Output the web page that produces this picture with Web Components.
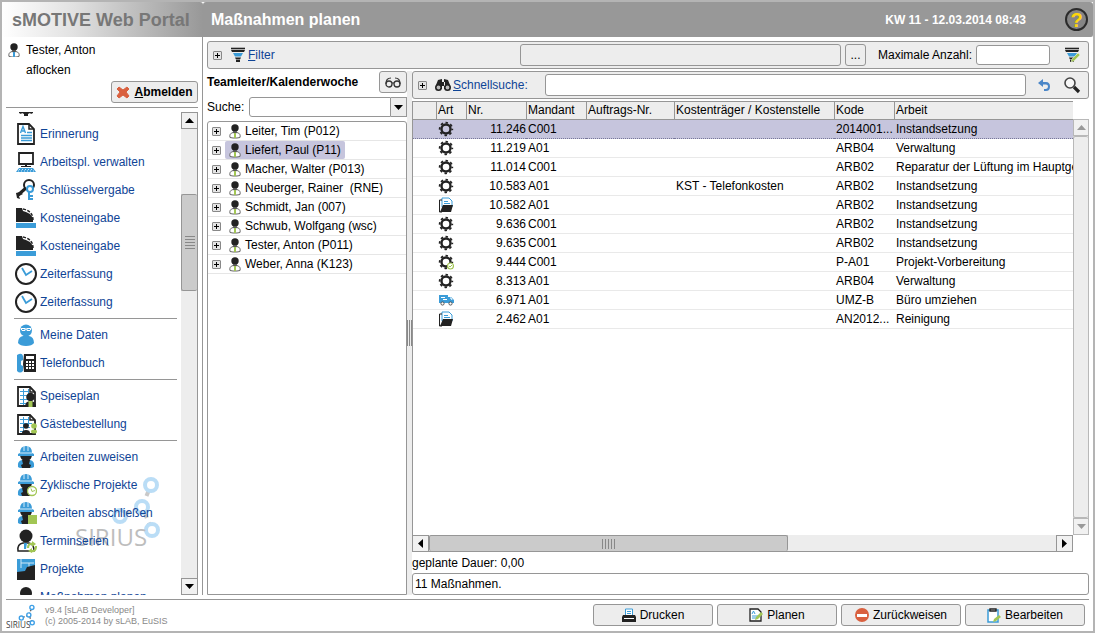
<!DOCTYPE html>
<html lang="de">
<head>
<meta charset="utf-8">
<title>sMOTIVE Web Portal</title>
<style>
  body { margin: 0; font: 12px/16px "Liberation Sans", Arial, sans-serif; color: #000;
    --line: #969696; --panel: #ededed; --link: #0f4496; --select: #c6c5dd; --blue: #3b9cd8; }
</style>
</head>
<body>
<portal-app></portal-app>
<script>
const BASE = `*{box-sizing:border-box} button,input{font:inherit;color:inherit;margin:0;padding:0}
  button{cursor:pointer} a{color:var(--link);text-decoration:none} ul{list-style:none;margin:0;padding:0}
  input{background:#fff;border:1px solid var(--line);border-radius:3px;min-width:0;padding:0 3px;outline:0}
  ui-icon{flex:none}`;

function component(name, css, html) {
  customElements.define(name, class extends HTMLElement {
    constructor() {
      super();
      const t = document.createElement('template');
      t.innerHTML = `<style>${BASE}${css}</style>${typeof html === 'function' ? html(this) : html}`;
      this.attachShadow({ mode: 'open' }).append(t.content.cloneNode(true));
    }
  });
}

/* ---------- icons ---------- */
const K = '#222', B = '#3b9cd8', G = '#a2c654';
const worker = `<path d="M3 22q-1-6 4-7l4 4 4-4q5 1 4 7-2 1-3 1H6q-2 0-3-1z" fill="${B}"/><path d="M7 15h8l-1 4 2 1-1 3H7l-1-3 2-1z" fill="${K}"/><path d="M5 9h12q0 7-6 7T5 9z" fill="${K}"/><path d="M5 8Q5 1 11 1t6 7l2 1v2H3V9z" fill="${B}"/><path d="M9 1v5M13 1v5M5 8h12" stroke="#d5ecfa" fill="none"/>`;
const plan = `<path d="M3 2h12l5 5v14H3z" fill="#fff" stroke="${K}" stroke-width="1.800"/><path d="M15 2v5h5" fill="none" stroke="${K}" stroke-width="1.500"/><path d="M5 6.500h9M5 10.500h12M5 14.500h10M5 18.500h6M8.500 4v16M13.500 4v9" stroke="${B}" fill="none"/>`;
const man = (c) => `<path d="M1 13.500q-1-4 3-5h4q4 1 3 5l-3 .5H4z" fill="#fff" stroke="#666"/><circle cx="6" cy="4" r="3.700" fill="${K}"/><path d="M4 7h4l-1 3H5z" fill="#555"/><path d="M5 9h2v5H5z" fill="${c}"/>`;
const gear = `<circle cx="8" cy="8" r="4.500" fill="none" stroke="${K}" stroke-width="2.400"/><circle cx="8" cy="8" r="6.300" fill="none" stroke="${K}" stroke-width="1.800" stroke-dasharray="2.500 2.450" stroke-dashoffset="1.250"/>`;
const funnel = `<path d="M1 1.500h14" stroke="${K}" stroke-width="1.600"/><path d="M1 3h14l-1 2H2z" fill="${K}"/><path d="M3 6h10l-2 3.500H5z" fill="${B}"/><path d="M5 10.500h6l-1 2H6zM6 13h4v2H6z" fill="${K}"/>`;
const pencil = `<path d="M7 15l1-3 6-6 2 2-6 6z" fill="${G}" stroke="#e6f0cf" stroke-width=".6"/>`;
const register = `<path d="M1 1h6l1 3 3 1 4 2 3 4v4H1z" fill="${K}"/><path d="M8 2q10 2 10 11" stroke="${K}" stroke-width="1.500" stroke-dasharray="3 1.500" fill="none"/><path d="M1 16h20v5H1z" fill="${B}"/>`;
const molecule = `<path d="M76 10L67 32 45 41M67 32l10 23" stroke="#666" stroke-width="4" stroke-dasharray="5 5" stroke-dashoffset="3" fill="none"/><g fill="#fff" stroke="#3d9fe6" stroke-width="4"><circle cx="76" cy="10" r="6"/><circle cx="67" cy="32" r="6"/><circle cx="45" cy="41" r="6"/><circle cx="77" cy="55" r="6"/></g>`;
const ICONS = {
  user: [12, 14, man(B)],
  leader: [12, 15, man(G)],
  cross: [14, 14, `<path d="M3 2l4 3 4-3 2 2-3 3 3 4-2 2-4-3-4 3-2-2 3-4-3-3z" fill="#d9603f" stroke="#d9603f" stroke-linejoin="round"/>`],
  note: [22, 22, `<path d="M3 1h11l5 5v15H3z" fill="#fff" stroke="${K}" stroke-width="1.800"/><path d="M14 1v5h5" fill="none" stroke="${K}" stroke-width="1.500"/><path d="M5.500 10L8 3.500 10.500 10M7 8h3M12 9.500h5M6 12.500h11M6 15h11M6 17.500h11" stroke="${B}" stroke-width="1.400" fill="none"/>`],
  computer: [22, 22, `<path d="M4 2h14v11H4z" fill="#fff" stroke="${K}" stroke-width="1.800"/><path d="M10 13h2v2h-2z" fill="${K}"/><path d="M6 15.500h10" stroke="${K}"/><path d="M4 17h14l3 4H1z" fill="${B}"/><path d="M4 18.500h14M3 20h16" stroke="#cfe8f8" stroke-dasharray="1 2"/>`],
  keys: [22, 22, `<circle cx="14" cy="6" r="5" fill="none" stroke="${K}" stroke-width="2"/><path d="M11 9L3 16" stroke="${K}" stroke-width="3"/><path d="M5 13l-4 1 1 5 3 1-1-3 4-2z" fill="${K}"/><circle cx="15" cy="10" r="3" fill="#fff" stroke="${B}" stroke-width="2"/><path d="M14 13v8M14 17h4M14 20h4" stroke="${B}" stroke-width="2"/>`],
  register: [22, 22, register],
  clock: [24, 24, `<circle cx="12" cy="12" r="10" fill="#fff" stroke="${K}" stroke-width="2"/><path d="M8 6l4 7 6-4" fill="none" stroke="${B}" stroke-width="1.800"/>`],
  person: [22, 22, `<circle cx="11" cy="6.500" r="6" fill="${B}"/><path d="M3 19q0-6 5-7h6q5 1 5 7-2 3-8 3t-8-3z" fill="${B}"/><path d="M6 4.500h4v2H7zM12 4.500h4l-1 2h-3zM10 5h2" fill="none" stroke="#fff"/>`],
  phone: [22, 22, `<path d="M2 3q5-3 6 1v4l-2 1v4l2 1v5q-3 3-6 0z" fill="${B}"/><path d="M9 2h12v18H9L8 12z" fill="${K}"/><path d="M11 4h8v3h-8zM11 9h2v2h-2zM14 9h2v2h-2zM17 9h2v2h-2zM11 12h2v2h-2zM14 12h2v2h-2zM17 12h2v2h-2zM11 15h2v2h-2zM14 15h2v2h-2zM17 15h2v2h-2z" fill="#fff"/>`],
  meal: [22, 22, plan + `<circle cx="15.500" cy="12" r="4.300" fill="${K}"/><path d="M10 22q0-6 5.500-6t5.500 6z" fill="${K}"/><path d="M15.500 16v6" stroke="${G}" stroke-width="4"/>`],
  guests: [22, 22, plan + `<circle cx="11" cy="13" r="2.800" fill="${K}"/><path d="M7 20q0-3 4-3t4 3z" fill="${K}"/><circle cx="19" cy="13" r="2.800" fill="${G}"/><ellipse cx="19" cy="18.500" rx="3" ry="2" fill="${G}"/>`],
  worker: [22, 24, worker],
  workerclock: [22, 24, worker + `<circle cx="17" cy="18" r="4.500" fill="#fff" stroke="${G}" stroke-width="1.300"/><path d="M16 15.500l1 3 3-1" fill="none" stroke="${G}"/>`],
  workerdone: [22, 24, worker + `<path d="M13 14h9v9h-9z" fill="${G}"/>`],
  series: [22, 24, `<circle cx="11" cy="7" r="6.500" fill="${K}"/><path d="M3 22q-1-7 5-8h6q5 1 5 8z" fill="#fff" stroke="${K}" stroke-width="1.500"/><path d="M9 14h3l-1 6H9z" fill="${B}"/><path d="M13 19q0-5 5-4M21 17q0 6-5 5" fill="none" stroke="${G}" stroke-width="2.200"/><path d="M17 12l4 3-4 3zM17 19l-4 3 4 2z" fill="${G}"/>`],
  project: [22, 22, `<path d="M2 1h18v14H2z" fill="${B}"/><path d="M6 1v9M6 5h8v5M14 5h5" stroke="#cfe8f8" fill="none"/><path d="M2 22V14l8-1 2-4 8-2v15z" fill="${K}"/>`],
  head: [22, 22, `<circle cx="11" cy="7" r="6" fill="${K}"/><path d="M2 22q0-8 9-8t9 8z" fill="${K}"/>`],
  cog: [22, 22, `<path d="M4 16h14v2l-2 1-1-1-2 1v2h-4v-2l-2-1-1 1-2-1z" fill="${K}"/>`],
  funnel: [16, 16, funnel],
  funneledit: [16, 16, funnel + pencil],
  glasses: [16, 12, `<circle cx="4" cy="8" r="3" fill="none" stroke="#333" stroke-width="1.300"/><circle cx="12" cy="8" r="3" fill="none" stroke="#333" stroke-width="1.300"/><path d="M7 7h2M1 8Q1 2 6 2M15 8q0-6-5-6" fill="none" stroke="#333" stroke-width="1.200"/>`],
  binoculars: [16, 14, `<path d="M3 2l4-1v10H1V7zM13 2L9 1v10h6V7zM6 4h4v4H6z" fill="${K}"/><circle cx="3.500" cy="9.500" r="2.700" fill="#bbb" stroke="${K}" stroke-width="1.600"/><circle cx="12.500" cy="9.500" r="2.700" fill="#bbb" stroke="${K}" stroke-width="1.600"/>`],
  undo: [14, 14, `<path d="M6 1L1 5l5 4V6.500h3q2 0 2 2T9 11H7v2h2q4 0 4-4.500T9 4H6z" fill="#4a86c8"/>`],
  lens: [18, 18, `<circle cx="7" cy="7" r="5" fill="#f6f6f6" stroke="#444" stroke-width="1.600"/><path d="M11 11l5 5" stroke="#222" stroke-width="3.200"/>`],
  gear: [16, 16, gear],
  gearclock: [16, 16, gear + `<circle cx="12.500" cy="12" r="3" fill="#fff" stroke="${G}" stroke-width="1.200"/><path d="M11 12l1 1 2-2" fill="none" stroke="${G}"/>`],
  folder: [16, 16, `<path d="M4 1h7l3 3v6H4z" fill="#fff" stroke="${B}"/><path d="M6 4.500h4M6 6.500h6" stroke="${B}"/><path d="M4 3H1.500v12H4" fill="none" stroke="${K}"/><path d="M2 15L5 8h10l-2 7z" fill="${K}"/>`],
  van: [16, 12, `<path d="M1 1h9v8H1zM10 3h3l3 3v3h-6z" fill="${B}"/><path d="M3 3.500h4M5 5.500h4M12 4h1l1 2" stroke="#fff" fill="none"/><circle cx="4.500" cy="9.500" r="1.600" fill="#fff" stroke="#555"/><circle cx="12.500" cy="9.500" r="1.600" fill="#fff" stroke="#555"/>`],
  printer: [14, 14, `<path d="M3.500 1h7v7h-7z" fill="#fff" stroke="${B}"/><path d="M5 3.500h4M5 5.500h4" stroke="${B}"/><path d="M1 7h12l1 2v5H0V9z" fill="${K}"/><path d="M2 10.500h10" stroke="#fff"/>`],
  plan: [14, 14, `<path d="M1 1h8l3 3v9H1z" fill="#fff" stroke="${K}" stroke-width="1.300"/><path d="M3 6l1.500-3L6 6M3 8h6M3 10h5" stroke="${B}" fill="none"/><path d="M6 12l1-3 5-5 2 2-5 5z" fill="${G}"/>`],
  stop: [14, 14, `<circle cx="7" cy="7" r="7" fill="#d9603f"/><path d="M2 6h10v3H2z" fill="#fff"/>`],
  clipboard: [14, 15, `<path d="M1 2h10v12H1z" fill="#fff" stroke="${B}" stroke-width="1.500"/><path d="M3 3V1h6v2z" fill="#fff" stroke="${K}" stroke-width="1.400"/><path d="M6 14l1-3 5-4 2 2-5 4z" fill="${G}"/>`],
  up: [9, 5, `<path d="M4.500 0L9 5H0z" fill="currentColor"/>`],
  down: [9, 5, `<path d="M0 0h9L4.500 5z" fill="currentColor"/>`],
  left: [5, 9, `<path d="M5 0v9L0 4.500z" fill="currentColor"/>`],
  right: [5, 9, `<path d="M0 0v9l5-4.500z" fill="currentColor"/>`],
};
customElements.define('ui-icon', class extends HTMLElement {
  connectedCallback() {
    if (this.shadowRoot) return;
    const [w, h, body] = ICONS[this.getAttribute('name')];
    this.attachShadow({ mode: 'open' }).innerHTML =
      `<style>:host{display:block;width:${w}px;height:${h}px}svg{display:block}</style><svg width="${w}" height="${h}" viewBox="0 0 ${w} ${h}" aria-hidden="true">${body}</svg>`;
  }
});

/* SIRIUS wordmark with its molecule, large or small */
component('sirius-logo', `:host{display:block} svg{display:block;width:100%;height:100%} text{font-family:"Liberation Sans Narrow","Open Sans",sans-serif;font-size:24px;fill:#444}`,
  `<svg viewBox="0 0 88 76">${molecule}<text x="0" y="71">SIRIUS</text></svg>`);

/* ---------- small controls ---------- */
component('ui-button', `:host{display:block}
  button{display:flex;align-items:center;justify-content:center;gap:4px;width:100%;height:22px;background:var(--panel);border:1px solid var(--line);border-radius:3px;white-space:nowrap}`,
  '<button type="button"><slot></slot></button>');

component('plus-box', `:host{display:block}
  button{display:grid;place-items:center;width:9px;height:9px;border:1px solid #888;border-radius:1px;background:linear-gradient(#000,#000) center/5px 1px no-repeat,linear-gradient(#000,#000) center/1px 5px no-repeat,#e4e4e4}`,
  '<button type="button" aria-label="Aufklappen"></button>');

component('scroll-bar', `:host{display:flex;flex-direction:column;width:17px;background:var(--panel)}
  :host([horizontal]){flex-direction:row;width:auto;height:17px;border-bottom:1px solid var(--line)}
  :host(:not([horizontal])){border-right:1px solid var(--line)}
  :host([disabled]){color:#999;--line:#b8b8b8;width:16px}
  button{flex:none;display:grid;place-items:center;width:100%;height:17px;background:#f1f1f1;border:1px solid var(--line)}
  :host([horizontal]) button{width:17px;height:100%;border-bottom:0}
  :host(:not([horizontal])) button{border-right:0}
  .before{flex:var(--before,0) 0 0}.after{flex:var(--after,0) 0 0}
  .thumb{flex:var(--thumb,1) 0 0;display:grid;place-items:center;background:#cbcbcb;border:1px solid var(--line);border-right:0;border-radius:2px}
  :host([horizontal]) .thumb{border-right:1px solid var(--line);border-bottom:0}
  :host([disabled]) .thumb{background:var(--panel)}
  .grip{width:10px;height:13px;background:repeating-linear-gradient(#888 0 1px,transparent 1px 3px)}
  :host([horizontal]) .grip{width:13px;height:10px;background:repeating-linear-gradient(90deg,#888 0 1px,transparent 1px 3px)}
  :host([disabled]) .grip{display:none}`,
  el => { const h = el.hasAttribute('horizontal');
    return `<button type="button" aria-label="Zurück"><ui-icon name="${h ? 'left' : 'up'}"></ui-icon></button><div class="before"></div><div class="thumb"><div class="grip"></div></div><div class="after"></div><button type="button" aria-label="Weiter"><ui-icon name="${h ? 'right' : 'down'}"></ui-icon></button>`; });

/* ---------- header ---------- */
component('portal-header', `:host{display:flex;height:35px;color:#fff;font-weight:bold}
  .brand{flex:none;width:201px;padding-left:10px;display:flex;align-items:center;font-size:18px;line-height:20px;color:#777;background:linear-gradient(90deg,#fff,#e2e2e2 35%,#989898);border-radius:2px 3px 0 0}
  .bar{flex:1;display:flex;align-items:center;background:#989898;padding:0 5px 0 8px;border-radius:3px 3px 2px 0}
  h1{margin:0;font-size:16px;line-height:20px;flex:1}
  time{margin-right:39px}
  button{width:23px;height:23px;border:2px solid #2b2b2b;border-radius:50%;background:#858585;color:#ffd60a;font-weight:bold;font-size:20px;line-height:18px}`,
  `<div class="brand">sMOTIVE Web Portal</div><div class="bar"><h1>Maßnahmen planen</h1><time datetime="2014-03-12T08:43">KW 11 - 12.03.2014 08:43</time><button type="button">?</button></div>`);

/* ---------- sidebar ---------- */
component('nav-item', `:host{display:block}
  a{display:flex;align-items:center;gap:2px;height:28px;white-space:nowrap}
  span{width:24px;flex:none;display:grid;place-items:center}`,
  el => `<a href="#"><span><ui-icon name="${el.getAttribute('icon')}"></ui-icon></span><slot></slot></a>`);

const NAV = [['cog', ''], ['note', 'Erinnerung'], ['computer', 'Arbeitspl. verwalten'], ['keys', 'Schlüsselvergabe'], ['register', 'Kosteneingabe'], ['register', 'Kosteneingabe'], ['clock', 'Zeiterfassung'], ['clock', 'Zeiterfassung'], 0,
  ['person', 'Meine Daten'], ['phone', 'Telefonbuch'], 0, ['meal', 'Speiseplan'], ['guests', 'Gästebestellung'], 0,
  ['worker', 'Arbeiten zuweisen'], ['workerclock', 'Zyklische Projekte'], ['workerdone', 'Arbeiten abschließen'], ['series', 'Terminserien'], ['project', 'Projekte'], ['head', 'Maßnahmen planen']];

component('portal-sidebar', `:host{display:flex;flex-direction:column;width:201px;padding:4px 4px 0 4px;min-height:0;border-right:1px solid var(--line)}
  .user{display:grid;grid-template-columns:12px 1fr;column-gap:6px;padding-left:2px;line-height:20px;align-items:center;margin-top:-1px}
  .user p{margin:0;grid-column:2}
  .logout{width:87px;align-self:flex-end;margin:1px 0 4px;font-weight:bold}
  .scroll{flex:1;min-height:0;display:flex;border-top:1px solid var(--line);padding-top:4px}
  nav{position:relative;flex:1;overflow:hidden;padding-left:8px}
  .items{position:relative;margin:-20px 4px 0 0}
  hr{border:0;border-top:1px solid var(--line);margin:2px 0}
  .mark{position:absolute;right:18px;bottom:44px;width:88px;height:76px;opacity:.35}
  scroll-bar{--before:66;--thumb:95;--after:290}`,
  `<div class="user"><ui-icon name="user"></ui-icon><p>Tester, Anton</p><p>aflocken</p></div>
   <ui-button class="logout"><ui-icon name="cross"></ui-icon><span><u>A</u>bmelden</span></ui-button>
   <div class="scroll"><nav><sirius-logo class="mark"></sirius-logo>
     <div class="items">${NAV.map(n => n ? `<nav-item icon="${n[0]}">${n[1]}</nav-item>` : '<hr>').join('')}</div>
   </nav><scroll-bar></scroll-bar></div>`);

/* ---------- filter and team ---------- */
component('tool-bar', `:host{display:flex;align-items:center;height:28px;background:var(--panel);border:1px solid var(--line);border-radius:3px;white-space:nowrap}`, '<slot></slot>');

component('filter-bar', `:host{display:block}
  .lead{width:312px;flex:none;display:flex;align-items:center;padding-left:5px}
  .lead ui-icon{margin:0 2px 0 8px}
  u{text-decoration:underline} input{height:22px}
  .text{flex:1;background:var(--panel)} .more{width:21px;margin:0 12px 0 4px}
  label{width:98px} .max{width:74px;height:20px;margin-right:14px} .edit{margin-right:8px}`,
  `<tool-bar><div class="lead"><plus-box></plus-box><ui-icon name="funnel"></ui-icon><a href="#"><u>F</u>ilter</a></div>
   <input class="text" aria-label="Filter" readonly><ui-button class="more">...</ui-button>
   <label for="max">Maximale Anzahl:</label><input class="max" id="max"><ui-icon class="edit" name="funneledit"></ui-icon></tool-bar>`);

const TEAM = ['Leiter, Tim (P012)', 'Liefert, Paul (P11)', 'Macher, Walter (P013)', 'Neuberger, Rainer&nbsp; (RNE)', 'Schmidt, Jan (007)', 'Schwub, Wolfgang (wsc)', 'Tester, Anton (P011)', 'Weber, Anna (K123)'];
component('team-panel', `:host{display:flex;flex-direction:column;width:200px;flex:none}
  .title{display:flex;align-items:center;justify-content:space-between;height:22px}
  h2{margin:0;font-size:12px;line-height:16px} .title ui-button{width:28px}
  .search{display:flex;align-items:center;height:20px;margin:4px 0}
  label{width:42px} input{flex:1;height:20px;border-radius:3px 0 0 3px}
  .drop{width:16px;height:20px;display:grid;place-items:center;background:var(--panel);border:1px solid var(--line);border-left:0}
  .tree{flex:1;border:1px solid var(--line);border-radius:3px 3px 0 0}
  li{display:flex;align-items:center;height:19px;padding-left:4px;border-bottom:1px solid #e6e6e6}
  li a{display:flex;align-items:center;gap:4px;height:18px;margin-left:4px;padding:0 4px;border-radius:2px;color:#000;white-space:nowrap}
  .on{background:var(--select)}`,
  `<div class="title"><h2>Teamleiter/Kalenderwoche</h2><ui-button><ui-icon name="glasses"></ui-icon></ui-button></div>
   <div class="search"><label for="q">Suche:</label><input id="q"><button class="drop" type="button" aria-label="Auswahl öffnen"><ui-icon name="down"></ui-icon></button></div>
   <ul class="tree">${TEAM.map((t, i) => `<li><plus-box></plus-box><a href="#"${i === 1 ? ' class="on"' : ''}><ui-icon name="leader"></ui-icon>${t}</a></li>`).join('')}</ul>`);

component('split-handle', `:host{display:flex;align-items:center;width:5px;background:var(--panel)}
  div{width:5px;height:26px;background:repeating-linear-gradient(90deg,#888 0 1px,transparent 1px 2px)}`, '<div></div>');

/* ---------- task table ---------- */
const ROWS = [['gear', '11.246', 'C001', '', '2014001...', 'Instandsetzung'], ['gear', '11.219', 'A01', '', 'ARB04', 'Verwaltung'], ['gear', '11.014', 'C001', '', 'ARB02', 'Reparatur der Lüftung im Hauptgebäude'],
  ['gear', '10.583', 'A01', 'KST - Telefonkosten', 'ARB02', 'Instandsetzung'], ['folder', '10.582', 'A01', '', 'ARB02', 'Instandsetzung'], ['gear', '9.636', 'C001', '', 'ARB02', 'Instandsetzung'],
  ['gear', '9.635', 'C001', '', 'ARB02', 'Instandsetzung'], ['gearclock', '9.444', 'C001', '', 'P-A01', 'Projekt-Vorbereitung'], ['gear', '8.313', 'A01', '', 'ARB04', 'Verwaltung'],
  ['van', '6.971', 'A01', '', 'UMZ-B', 'Büro umziehen'], ['folder', '2.462', 'A01', '', 'AN2012...', 'Reinigung']];
component('task-table', `:host{display:grid;grid-template:1fr 17px/1fr 16px;flex:1;min-height:0}
  .view{overflow:hidden;border-left:1px solid var(--line)}
  table{width:100%;table-layout:fixed;border-collapse:separate;border-spacing:0}
  th,td{padding:0 0 0 2px;height:19px;line-height:18px;text-align:left;font-weight:normal;white-space:nowrap;overflow:hidden;border-bottom:1px solid #e9e9e9}
  th{background:var(--panel);border-top:1px solid var(--line);border-bottom-color:var(--line);padding-left:1px;line-height:17px}
  th+th{border-left:1px solid var(--line)}
  .num{text-align:right;padding:0}
  td.icon ui-icon{margin:0}
  .on td{background:var(--select);border-bottom:1px dotted #77779a}
  .v{margin-top:18px;--thumb:1} .h{--before:0;--thumb:359;--after:269}`,
  `<div class="view"><table><colgroup><col style="width:23px"><col style="width:30px"><col style="width:60px"><col style="width:60px"><col style="width:88px"><col style="width:160px"><col style="width:60px"><col></colgroup>
   <thead><tr><th></th><th>Art</th><th>Nr.</th><th>Mandant</th><th>Auftrags-Nr.</th><th>Kostenträger / Kostenstelle</th><th>Kode</th><th>Arbeit</th></tr></thead>
   <tbody>${ROWS.map((r, i) => `<tr${i ? '' : ' class="on"'}><td></td><td class="icon"><ui-icon name="${r[0]}"></ui-icon></td><td class="num">${r[1]}</td><td>${r[2]}</td><td></td><td>${r[3]}</td><td>${r[4]}</td><td>${r[5]}</td></tr>`).join('')}</tbody></table></div>
   <scroll-bar class="v" disabled></scroll-bar><scroll-bar class="h" horizontal></scroll-bar>`);

component('task-panel', `:host{display:flex;flex-direction:column;flex:1;min-width:0}
  .lead{width:132px;flex:none;display:flex;align-items:center;padding-left:5px}
  .lead ui-icon{margin:0 2px 0 8px} input{height:22px} .find{flex:1;margin-right:11px} .undo{margin-right:12px} .lens{margin-right:7px}
  task-table{margin-top:2px}
  p{margin:3px 0 2px} output{display:block;height:22px;line-height:20px;border:1px solid var(--line);border-radius:3px;padding-left:2px}`,
  `<tool-bar><div class="lead"><plus-box></plus-box><ui-icon name="binoculars"></ui-icon><a href="#"><u>S</u>chnellsuche:</a></div><input class="find" aria-label="Schnellsuche"><ui-icon class="undo" name="undo"></ui-icon><ui-icon class="lens" name="lens"></ui-icon></tool-bar>
   <task-table></task-table><p>geplante Dauer: 0,00</p><output>11 Maßnahmen.</output>`);

/* ---------- footer ---------- */
component('portal-footer', `:host{display:flex;margin:4px 4px 0;height:32px;border-top:1px solid var(--line)}
  sirius-logo{width:30px;height:26px;margin:4px 9px 0 0} p{margin:5px 0 0;flex:1;font-size:9px;line-height:11px;color:#888}
  .actions{display:flex;gap:4px;padding:4px 4px 0 0} ui-button{width:120px}`,
  `<sirius-logo></sirius-logo>
   <p>v9.4 [sLAB Developer]<br>(c) 2005-2014 by sLAB, EuSIS</p>
   <div class="actions"><ui-button><ui-icon name="printer"></ui-icon>Drucken</ui-button><ui-button><ui-icon name="plan"></ui-icon>Planen</ui-button><ui-button><ui-icon name="stop"></ui-icon>Zurückweisen</ui-button><ui-button><ui-icon name="clipboard"></ui-icon>Bearbeiten</ui-button></div>`);

component('portal-app', `:host{display:flex;flex-direction:column;height:100vh;min-width:900px;box-sizing:border-box;border:2px solid #b4b4b4;background:#fff}
  .body{flex:1;min-height:0;display:flex}
  main{flex:1;min-width:0;display:flex;flex-direction:column;padding:4px 4px 0 4px}
  .split{flex:1;min-height:0;display:flex;margin-top:2px}`,
  `<portal-header></portal-header><div class="body"><portal-sidebar></portal-sidebar><main><filter-bar></filter-bar><div class="split"><team-panel></team-panel><split-handle></split-handle><task-panel></task-panel></div></main></div><portal-footer></portal-footer>`);
</script>
</body>
</html>
